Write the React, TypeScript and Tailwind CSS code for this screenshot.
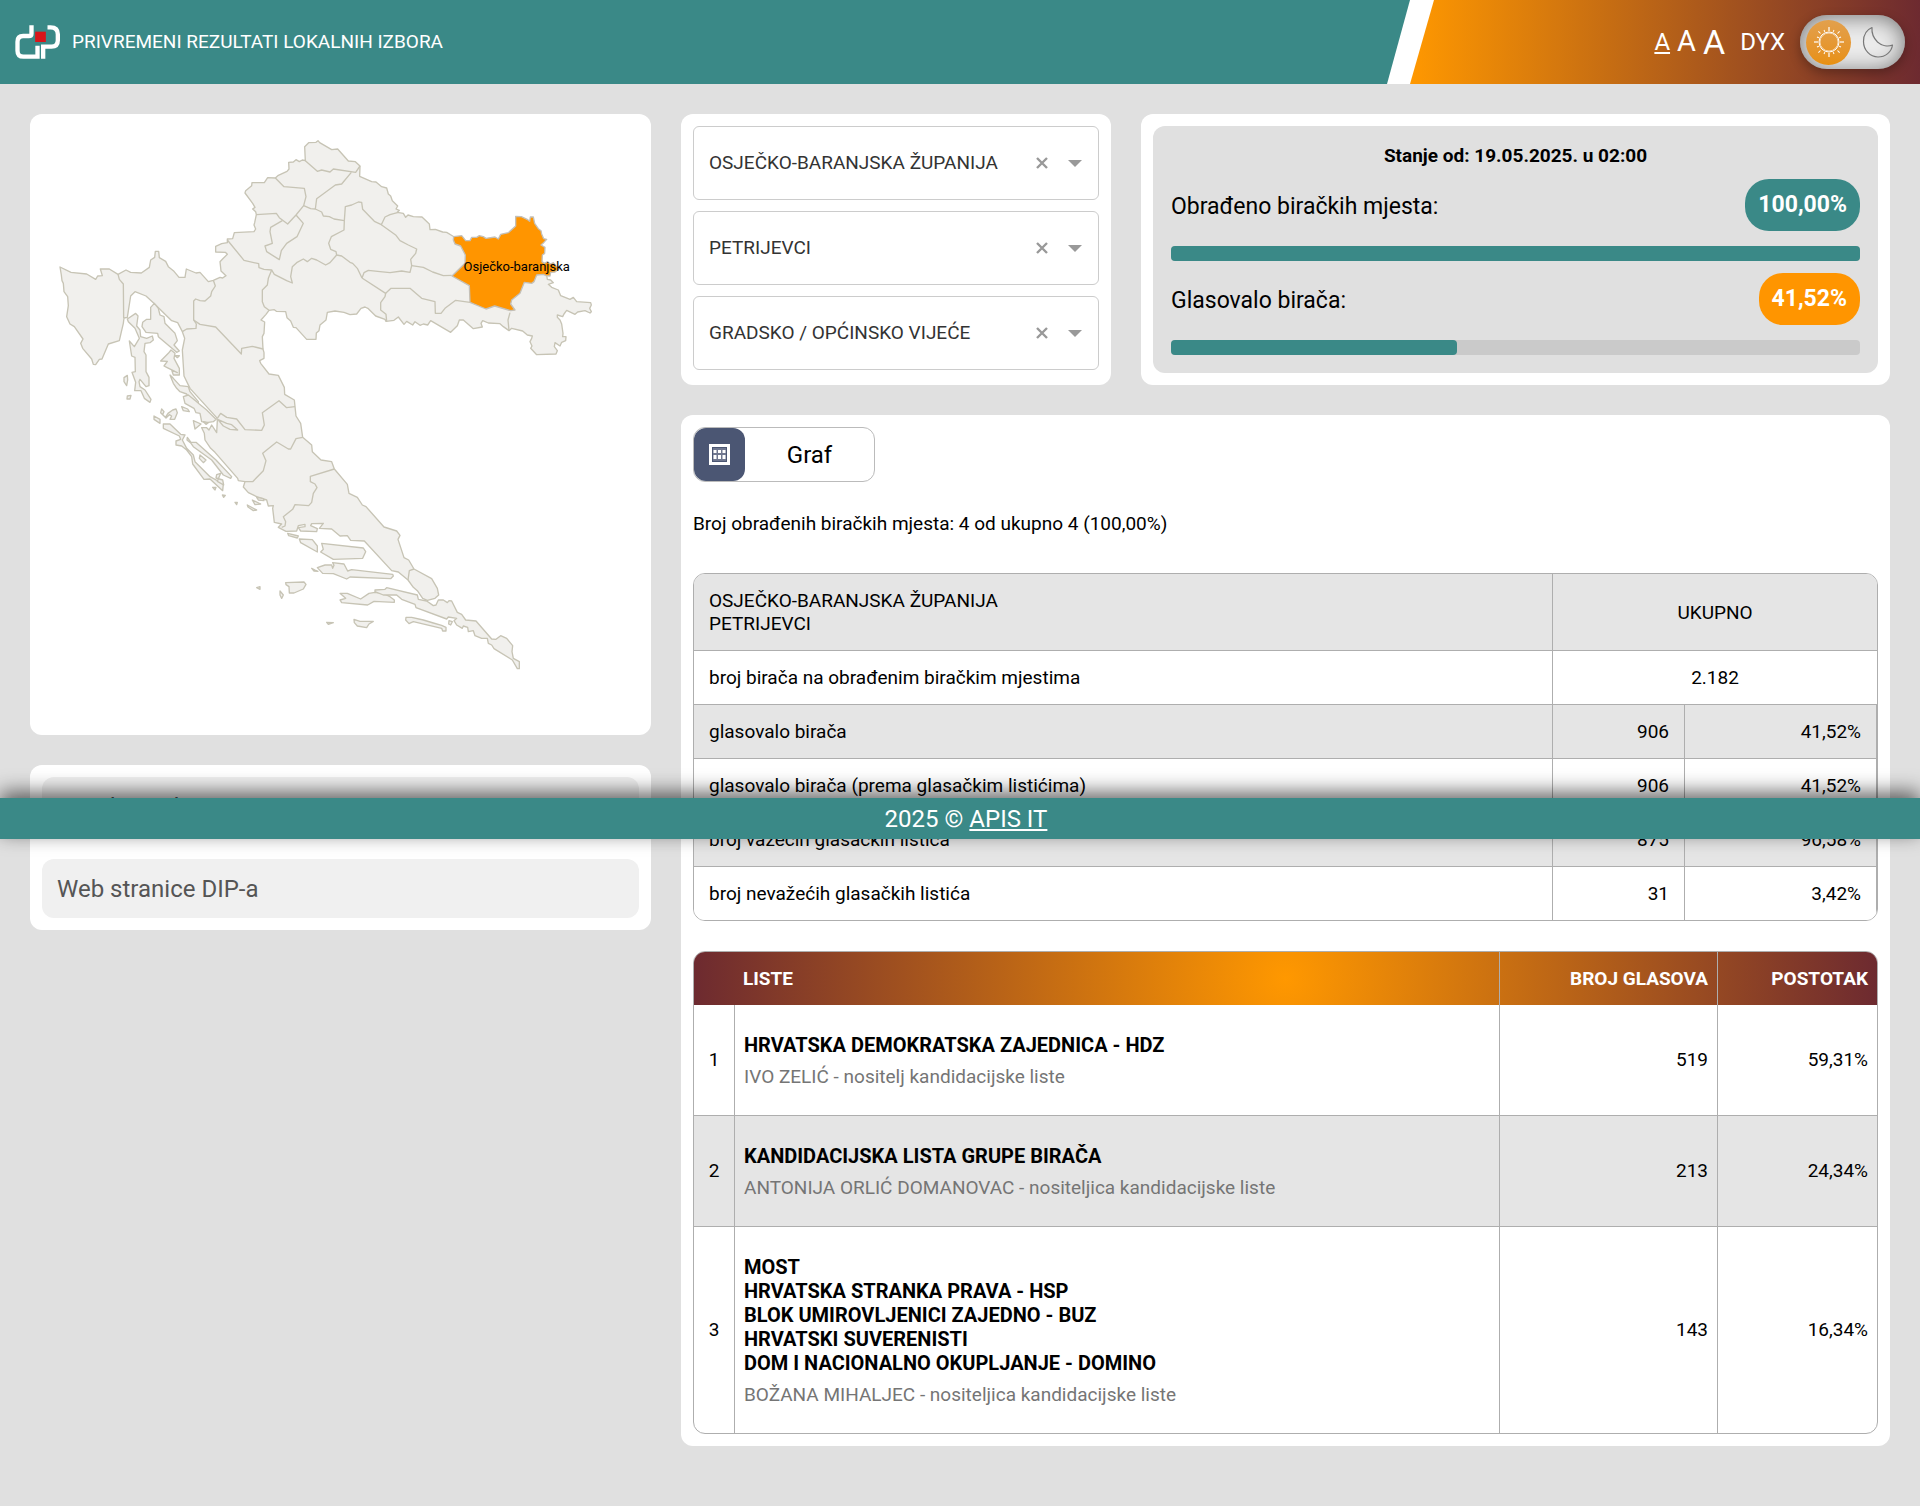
import { useState } from "react";

const COUNTRY =
  "M60 441 93 457 140 462 167 478 173 468 187 467 181 447 208 447 234 463 258 450 272 457 304 459 328 442 332 420 344 412 346 394 356 394 358 413 377 424 385 440 402 454 417 472 435 472 439 447 468 459 480 457 505 485 520 481 540 472 548 474 558 467 543 453 540 425 547 418 562 403 556 397 527 396 527 379 545 371 562 368 562 357 578 356 583 338 642 335 647 327 642 315 644 308 649 284 647 275 638 267 645 262 638 250 615 219 617 212 635 197 636 188 673 188 683 173 706 174 715 166 741 154 747 147 746 127 760 126 768 119 778 125 787 120 796 122 794 80 806 68 828 67 834 62 839 68 875 89 893 87 925 123 946 125 960 138 959 169 995 185 1008 186 1025 200 1040 204 1045 222 1052 228 1057 242 1073 258 1068 267 1078 271 1072 277 1090 280 1097 292 1104 285 1120 290 1146 291 1168 312 1170 329 1186 328 1208 336 1220 337 1238 348 1320 400 1500 440 1520 465 1522 478 1532 480 1540 488 1525 493 1535 502 1555 510 1562 527 1590 538 1600 532 1610 545 1652 548 1654 555 1649 565 1654 575 1650 579 1635 572 1613 576 1605 583 1580 571 1572 582 1568 590 1552 585 1552 592 1560 600 1565 612 1569 640 1568 650 1578 650 1577 662 1565 667 1560 678 1545 668 1543 680 1552 692 1548 702 1490 704 1472 685 1476 678 1470 665 1475 655 1477 648 1462 645 1448 633 1415 625 1407 632 1390 620 1380 611 1345 609 1328 602 1323 610 1327 621 1300 626 1270 600 1258 600 1252 617 1232 637 1172 602 1163 615 1150 612 1140 616 1125 605 1118 615 1100 604 1092 613 1075 591 1062 601 1038 604 1035 598 1007 588 985 566 975 561 963 565 950 582 930 584 912 577 885 573 862 577 858 600 840 615 837 632 829 639 828 658 800 658 768 623 760 622 752 603 741 593 737 575 709 574 703 569 687 571 678 583 663 600 674 606 672 640 667 650 669 687 672 698 672 715 659 722 662 730 687 762 715 766 733 802 734 823 763 840 768 888 782 910 788 952 815 975 817 995 843 1020 875 1025 883 1047 922 1093 927 1120 952 1132 967 1155 978 1160 1032 1221 1070 1233 1080 1246 1074 1258 1092 1313 1106 1320 1122 1347 1175 1376 1192 1405 1196 1425 1185 1435 1162 1441 1148 1435 1132 1412 1120 1402 1104 1380 1075 1356 1055 1352 973 1263 932 1261 922 1247 900 1248 875 1227 838 1225 850 1210 815 1211 812 1217 832 1226 830 1235 782 1233 775 1223 795 1220 795 1213 775 1217 770 1233 738 1234 715 1222 725 1212 703 1207 698 1165 700 1157 685 1158 680 1140 650 1130 625 1118 610 1101 615 1085 595 1082 593 1075 525 997 512 985 495 960 493 940 485 923 500 923 507 930 515 915 530 938 532 902 530 893 450 805 432 768 427 690 434 655 427 635 413 608 395 602 340 548 318 528 285 515 272 528 262 592 252 594 250 610 243 640 238 662 205 672 186 717 178 718 167 734 160 733 155 717 128 685 122 670 129 657 103 620 90 612 80 590 85 557 83 530 72 515 70 490 66 482 64 465Z";

const OSIJEK =
  "M1241 350 1265 347 1270 353 1277 362 1290 362 1295 352 1310 352 1318 347 1330 350 1338 355 1365 351 1375 357 1382 343 1405 338 1427 318 1427 289 1444 290 1463 299 1469 304 1471 291 1480 291 1484 310 1495 326 1503 332 1505 342 1511 356 1520 358 1511 368 1503 375 1515 382 1514 400 1507 405 1506 425 1513 430 1523 425 1531 432 1540 428 1548 438 1558 446 1545 456 1532 457 1530 468 1518 467 1510 463 1490 465 1482 485 1475 490 1453 487 1440 520 1415 540 1412 552 1425 570 1412 572 1364 558 1338 567 1290 547 1288 497 1236 468 1275 430 1276 405 1262 378 1245 372 1240 360Z";

const BORDERS = [
  "M234 463 238 478 250 492 251 594",
  "M520 481 526 498 515 515 512 528 495 543 480 542 467 537 461 543 461 600 469 612 468 625 440 627 427 635",
  "M461 600 480 613 527 621 604 702 605 685 637 679 669 687",
  "M562 360 612 421 656 431 657 443 672 448 695 450 685 475 682 495 667 510 667 545 673 560 687 571",
  "M695 450 703 463 740 482 757 489 752 470 757 440 770 428 790 417 802 425 815 415 830 420 857 435 870 428 890 405",
  "M649 284 709 280 718 293 743 312 768 285 791 257",
  "M706 174 732 200 793 205 798 230 791 257 812 266 826 267 830 236 886 195 905 192 934 157",
  "M796 122 832 154 845 150 870 156 880 147 947 157 960 138",
  "M826 267 845 276 850 288 868 290 882 297 913 302 912 330 874 350 866 370 872 388 888 395 890 405 905 408 930 427 938 430 952 445 966 474",
  "M727 302 692 322 690 335 697 370 675 378 680 395 718 419 724 392 740 370 771 350 790 310 768 285",
  "M913 302 916 260 935 255 955 246 965 247 968 268 1003 304 1024 314 1035 291 1050 284 1075 277",
  "M1024 314 1068 346 1080 362 1105 375 1130 387 1127 400 1112 418 1115 437 1110 457 1085 453 1050 458 1020 455 985 451 972 458 966 474",
  "M966 474 1037 520 1035 530 1022 548 1022 570 1038 583 1040 604",
  "M1037 520 1053 505 1110 505 1145 535 1185 545 1186 580 1203 580 1215 565 1247 541 1290 547",
  "M1115 437 1150 442 1178 456 1210 467 1235 466",
  "M1407 632 1404 600 1410 578",
  "M765 860 740 863 717 842 667 878 673 915 665 931 615 929 590 897 560 892 542 880 532 895",
  "M788 952 768 956 752 987 745 987 710 966 668 1000 678 1022 670 1052 638 1085 615 1085",
  "M883 1047 811 1069 811 1085 825 1092 831 1103 820 1120 815 1147 806 1157 765 1154 758 1168 730 1190 737 1205 735 1218 725 1222",
  "M1122 1347 1108 1352 1104 1380",
];

// Kvarner
const ISLANDS_NORTH = [
  "M262 597 287 580 294 588 290 618 300 630 302 650 320 655 337 648 340 660 330 668 315 670 312 695 318 705 318 755 327 772 327 797 318 800 300 778 297 785 300 800 315 810 333 838 330 847 313 835 303 812 284 812 287 787 276 757 286 755 285 712 275 708 268 663 283 680 298 655 285 625 265 605Z",
  "M343 550 355 565 360 585 372 590 375 610 405 640 412 662 402 675 418 693 410 697 355 650 353 640 318 637 306 620 308 607 320 598 332 598 332 562Z",
  "M393 690 405 700 402 715 418 745 418 765 400 765 395 750 412 758 380 742 372 738 382 724 362 723 385 700Z",
  "M405 707 418 707 412 713Z",
  "M390 765 400 775 420 797 445 800 450 815 475 845 475 852 450 840 440 822 420 815 410 805 400 790Z",
  "M252 773 262 766 263 780 260 797 252 785Z",
  "M262 828 273 826 270 837 261 837Z",
];

// Zadar and Šibenik archipelago
const ISLANDS_MIDDLE = [
  "M220 132 240 132 272 163 285 165 277 180 290 205 310 225 315 245 360 290 400 312 398 332 360 297 342 298 308 252 305 230 290 210 275 198 258 195 258 183 272 178 268 168 220 145Z",
  "M292 172 303 187 318 187 378 240 425 290 422 295 400 285 365 240 310 200 303 190 291 180Z",
  "M330 225 348 240 340 248 328 235Z",
  "M392 280 380 284 378 294 398 300 401 315 382 304Z",
  "M192 108 210 118 210 130 192 118Z",
  "M215 87 222 95 218 103 226 112 234 100 248 90 258 87 262 98 254 118 240 118 245 108 238 104 228 114 212 98Z",
  "M275 80 293 87 298 95 280 92Z",
  "M280 50 295 45 320 65 328 72 350 90 378 118 370 125 350 128 335 125 330 100 318 98 312 85 285 70Z",
  "M310 122 333 132 315 147Z",
  "M383 118 410 130 425 134 443 150 420 148 400 138Z",
  "M340 125 355 128 348 133Z",
  "M368 322 378 322 375 330Z",
  "M397 345 406 346 401 352Z",
  "M435 367 442 367 440 374Z",
  "M472 375 500 390 490 392 474 381Z",
  "M487 360 512 372 495 374Z",
  "M500 352 520 356 522 362 505 360Z",
  "M593 460 625 468 622 474 596 467Z",
  "M628 477 667 479 682 498 682 516 632 488Z",
  "M587 608 642 606 648 613 640 627 612 639 598 639 597 620 588 614Z",
  "M500 623 510 620 510 628Z",
  "M570 633 580 645 575 655 570 645Z",
];

// Split and Dubrovnik
const ISLANDS_SOUTH = [
  "M65 490 190 504 197 515 188 535 100 538 62 516 70 508Z",
  "M52 563 75 555 95 555 98 565 102 556 98 548 132 552 143 573 155 569 278 583 280 588 272 596 150 591 140 597 100 581 68 580Z",
  "M35 565 45 570 54 574 42 573Z",
  "M120 640 142 640 182 657 207 640 225 637 250 640 270 650 283 660 283 667 222 664 203 675 125 668 120 660 137 655Z",
  "M162 718 180 724 220 724 207 732 200 743 172 738 163 728Z",
  "M80 727 100 728 85 733Z",
  "M318 712 335 712 370 720 400 729 425 736 438 742 438 753 428 753 425 745 340 725 327 731 317 720Z",
  "M447 722 457 725 452 735 446 732Z",
  "M225 630 255 628 260 623 352 645 355 658 380 663 400 677 408 675 415 660 430 660 442 668 447 662 455 663 472 697 485 703 497 720 528 723 575 777 588 778 602 767 620 775 638 797 636 815 640 835 658 845 658 866 652 866 637 840 582 806 575 795 565 790 562 775 545 775 525 767 520 752 505 755 503 742 490 738 487 745 470 735 462 722 470 715 445 711 440 717 348 683 345 673 305 658 290 645 250 645 225 635Z",
];

function CountyMap() {
  return (
    <svg
      viewBox="-30 -18 1863 1863"
      className="block w-full"
      role="img"
      aria-label="Karta županija"
    >
      <g fill="#f1f0ed" stroke="#c7c4b5" strokeWidth="4" strokeLinejoin="round">
        <path d={COUNTRY} />
        {BORDERS.map((d) => (
          <path key={d} d={d} fill="none" />
        ))}
        <path d={OSIJEK} fill="#ff9500" stroke="#c4c0b8" />
        {ISLANDS_NORTH.map((d) => (
          <path key={d} d={d} />
        ))}
        <g transform="translate(150 780)">
          {ISLANDS_MIDDLE.map((d) => (
            <path key={d} d={d} />
          ))}
        </g>
        <g transform="translate(780 780)">
          {ISLANDS_SOUTH.map((d) => (
            <path key={d} d={d} />
          ))}
        </g>
      </g>
      <text x="1430" y="453" textAnchor="middle" fontSize="39">
        Osječko-baranjska
      </text>
    </svg>
  );
}

function Logo() {
  return (
    <svg viewBox="0 0 134 102" className="h-[34px] w-[45px]" aria-hidden>
      <g fill="none" stroke="#fff" strokeWidth="13" strokeLinecap="butt">
        <path d="M49 1v25q0 7-8 7H24Q7 33 7 50v27q0 18 18 18h42V62" />
        <path d="M97 7h9q22 0 22 21v18q0 19-19 19H84v36" />
      </g>
      <rect x="60" y="20" width="32" height="31" fill="#d9151a" />
    </svg>
  );
}

const RAYS = [0, 22.5, 45, 67.5, 90, 112.5, 135, 157.5, 180, 202.5, 225, 247.5, 270, 292.5, 315, 337.5];

function ThemeSwitch() {
  const [dark, setDark] = useState(false);
  return (
    <button
      type="button"
      role="switch"
      aria-checked={dark}
      aria-label="Tamni način"
      onClick={() => setDark((d) => !d)}
      className="flex h-[54px] w-[105px] items-center justify-between rounded-full bg-[#ececec] pl-[6px] pr-[11px] shadow-[inset_0_2px_22px_rgba(0,0,0,0.5),0_4px_12px_rgba(0,0,0,0.3)]"
    >
      <span className="flex size-[45px] items-center justify-center rounded-full bg-linear-to-b from-[#e2a04c] to-[#e8900d]">
        <svg viewBox="0 0 32 32" className="size-8" fill="none" stroke="#fff">
          <circle cx="16" cy="16" r="10" strokeWidth="1" />
          <circle cx="16" cy="16" r="9" strokeWidth="1" opacity="0.6" />
          {RAYS.map((a, i) => (
            <path
              key={a}
              d={i % 4 === 0 ? "M16 1v4" : i % 2 === 0 ? "M16 1v3" : "M16 3v2"}
              strokeWidth={i % 4 === 0 ? 2 : 1}
              opacity={i % 4 === 0 ? 0.6 : 1}
              transform={`rotate(${a} 16 16)`}
            />
          ))}
        </svg>
      </span>
      <svg viewBox="0 0 32 32" className="size-8" fill="none" stroke="#777" strokeWidth="1.2" strokeLinejoin="round">
        <path d="M10 1.500C4 4 1.500 10 1.500 15.500 1.500 24 8 31 16 31c7.500 0 13.500-5 14.500-12-4.500 2-10.500 1-15-3-4-4-6-9-5.500-14.500z" />
      </svg>
    </button>
  );
}

function Header() {
  return (
    <header className="flex h-[84px] bg-white text-white">
      <div className="flex flex-1 items-center gap-3 bg-[#3a8987] pl-[15px] [clip-path:polygon(0_0,100%_0,calc(100%_-_23px)_100%,0_100%)]">
        <Logo />
        <h1 className="text-[19px]">PRIVREMENI REZULTATI LOKALNIH IZBORA</h1>
      </div>
      <div className="flex w-[510px] items-center justify-end bg-[linear-gradient(to_right,#ff9800,#6d2a30)] pr-[15px] [clip-path:polygon(24px_0,100%_0,100%_100%,0_100%)]">
        <div className="flex items-center gap-[7px]">
          <button type="button" aria-label="Mala slova" className="text-2xl underline underline-offset-2">A</button>
          <button type="button" aria-label="Srednja slova" className="text-[29px]">A</button>
          <button type="button" aria-label="Velika slova" className="text-[34px]">A</button>
        </div>
        <button type="button" className="mx-[15px] text-2xl">DYX</button>
        <ThemeSwitch />
      </div>
    </header>
  );
}

const FILTERS = [
  { id: "zupanija", label: "Županija", value: "OSJEČKO-BARANJSKA ŽUPANIJA" },
  { id: "grad", label: "Grad / općina", value: "PETRIJEVCI" },
  { id: "razina", label: "Vrsta izbora", value: "GRADSKO / OPĆINSKO VIJEĆE" },
];

function Filters() {
  return (
    <section className="flex flex-col gap-[11px] rounded-xl bg-white p-3">
      {FILTERS.map((f) => (
        <div key={f.id} className="flex h-[74px] items-center rounded-md border border-[#ccc] pr-4">
          <select
            id={f.id}
            aria-label={f.label}
            defaultValue={f.value}
            className="h-full min-w-0 flex-1 appearance-none bg-transparent pl-[15px] text-[19px] text-[#333]"
          >
            <option>{f.value}</option>
          </select>
          <button type="button" aria-label="Očisti" className="mr-5">
            <svg viewBox="0 0 12 12" className="size-3" stroke="#999" strokeWidth="2.4">
              <path d="M1 1l10 10M11 1L1 11" />
            </svg>
          </button>
          <svg viewBox="0 0 14 7" className="h-[7px] w-[14px]" fill="#999" aria-hidden>
            <path d="M0 0h14L7 7z" />
          </svg>
        </div>
      ))}
    </section>
  );
}

function Progress({ label, text, value, pill }: { label: string; text: string; value: number; pill: string }) {
  return (
    <div>
      <div className="flex items-center justify-between">
        <span className="pt-1 text-[23px]">{label}</span>
        <span className={`rounded-3xl px-[13px] text-[23px] leading-[52px] font-bold text-white ${pill}`}>
          {text}
        </span>
      </div>
      <div
        role="progressbar"
        aria-label={label}
        aria-valuenow={value}
        className="mt-[15px] h-[15px] rounded bg-[#cacaca]"
      >
        <div className="h-full rounded bg-[#3a8987]" style={{ width: `${value}%` }} />
      </div>
    </div>
  );
}

const SUMMARY = [
  { label: "glasovalo birača", count: "906", share: "41,52%" },
  { label: "glasovalo birača (prema glasačkim listićima)", count: "906", share: "41,52%" },
  { label: "broj važećih glasačkih listića", count: "875", share: "96,58%" },
  { label: "broj nevažećih glasačkih listića", count: "31", share: "3,42%" },
];

function SummaryTable() {
  return (
    <div className="overflow-hidden rounded-xl border border-[#aeaeae]">
      <table className="w-full table-fixed border-separate border-spacing-0 text-[19px] leading-[23px]">
        <colgroup>
          <col />
          <col className="w-[132px]" />
          <col className="w-[193px]" />
        </colgroup>
        <thead>
          <tr className="h-[76px] bg-[#e5e5e5]">
            <th className="px-[15px] text-left font-normal">
              OSJEČKO-BARANJSKA ŽUPANIJA
              <br />
              PETRIJEVCI
            </th>
            <th colSpan={2} className="border-l border-[#aeaeae] font-normal">UKUPNO</th>
          </tr>
        </thead>
        <tbody>
          <tr className="h-[54px]">
            <td className="border-t border-[#aeaeae] px-[15px]">broj birača na obrađenim biračkim mjestima</td>
            <td colSpan={2} className="border-t border-l border-[#aeaeae] text-center">2.182</td>
          </tr>
          {SUMMARY.map((r) => (
            <tr key={r.label} className="h-[54px] odd:bg-white even:bg-[#e5e5e5]">
              <td className="border-t border-[#aeaeae] px-[15px]">{r.label}</td>
              <td className="border-t border-l border-[#aeaeae] px-[15px] text-right">{r.count}</td>
              <td className="border-x border-t border-[#aeaeae] px-[15px] text-right">{r.share}</td>
            </tr>
          ))}
        </tbody>
      </table>
    </div>
  );
}

const LISTS = [
  {
    names: ["HRVATSKA DEMOKRATSKA ZAJEDNICA - HDZ"],
    holder: "IVO ZELIĆ - nositelj kandidacijske liste",
    votes: "519",
    share: "59,31%",
  },
  {
    names: ["KANDIDACIJSKA LISTA GRUPE BIRAČA"],
    holder: "ANTONIJA ORLIĆ DOMANOVAC - nositeljica kandidacijske liste",
    votes: "213",
    share: "24,34%",
  },
  {
    names: [
      "MOST",
      "HRVATSKA STRANKA PRAVA - HSP",
      "BLOK UMIROVLJENICI ZAJEDNO - BUZ",
      "HRVATSKI SUVERENISTI",
      "DOM I NACIONALNO OKUPLJANJE - DOMINO",
    ],
    holder: "BOŽANA MIHALJEC - nositeljica kandidacijske liste",
    votes: "143",
    share: "16,34%",
  },
];

function ListsTable() {
  return (
    <div className="mt-[30px] overflow-hidden rounded-xl border border-[#aeaeae]">
      <table className="w-full table-fixed border-separate border-spacing-0 text-[19px] leading-6">
        <colgroup>
          <col className="w-10" />
          <col />
          <col className="w-[218px]" />
          <col className="w-[160px]" />
        </colgroup>
        <thead>
          <tr className="h-[53px] bg-[radial-gradient(circle,#ff9800,#6d2a30)] text-white">
            <th aria-label="Redni broj" />
            <th className="px-[9px] text-left">LISTE</th>
            <th className="border-l border-[#aeaeae] px-[9px] text-right">BROJ GLASOVA</th>
            <th className="border-l border-[#aeaeae] px-[9px] text-right">POSTOTAK</th>
          </tr>
        </thead>
        <tbody className="[&>tr+tr>td]:border-t">
          {LISTS.map((l, i) => (
            <tr key={l.votes} className="even:bg-[#e5e5e5]">
              <td className="border-[#aeaeae] text-center">{i + 1}</td>
              <td className="border-l border-[#aeaeae] px-[9px] pt-[28px] pb-[26px]">
                {l.names.map((n) => (
                  <div key={n} className="text-[20px] leading-6 font-bold">{n}</div>
                ))}
                <div className="mt-2 text-[#757575]">{l.holder}</div>
              </td>
              <td className="border-l border-[#aeaeae] px-[9px] text-right">{l.votes}</td>
              <td className="border-l border-[#aeaeae] px-[9px] text-right">{l.share}</td>
            </tr>
          ))}
        </tbody>
      </table>
    </div>
  );
}

function ViewToggle() {
  return (
    <div className="flex h-[55px] w-[182px] rounded-xl border border-[#bbb]">
      <button
        type="button"
        aria-label="Tablica"
        aria-pressed="true"
        className="flex w-[51px] items-center justify-center rounded-xl bg-[#4b5673]"
      >
        <svg viewBox="0 0 21 21" className="size-[21px]" fill="#fff" aria-hidden>
          <path d="M0 0h21v21H0zM3 3v15h15V3z" fillRule="evenodd" />
          <path d="M4 4h13v13H4z" opacity="0.2" />
          <path d="M4.500 6h3v3h-3zM9 6h3v3H9zM13.500 6h3v3h-3zM4.500 11h3v4h-3zM9 11h3v4H9zM13.500 11h3v4h-3z" />
        </svg>
      </button>
      <button type="button" aria-pressed="false" className="flex-1 text-2xl">Graf</button>
    </div>
  );
}

const LINKS = [
  { href: "#arhiva", text: "Rezultati izbora iz 2021." },
  { href: "#dip", text: "Web stranice DIP-a" },
];

export default function App() {
  return (
    <div className="relative min-h-screen bg-[#e0e0e0] font-['Roboto',sans-serif] text-black">
      <Header />
      <main className="grid grid-cols-[621fr_1209fr] items-start gap-[30px] px-[30px] pt-[30px] pb-[60px]">
        <div className="flex flex-col gap-[30px]">
          <section className="overflow-hidden rounded-xl bg-white">
            <CountyMap />
          </section>
          <nav className="flex flex-col gap-[23px] rounded-xl bg-white p-3">
            {LINKS.map((l) => (
              <a
                key={l.href}
                href={l.href}
                className="rounded-xl bg-[#f0f0f0] px-[15px] pt-[2px] text-2xl leading-[57px] text-[#555]"
              >
                {l.text}
              </a>
            ))}
          </nav>
        </div>
        <div className="flex flex-col gap-[30px]">
          <div className="grid h-[271px] grid-cols-[430fr_749fr] gap-[30px]">
            <Filters />
            <section className="rounded-xl bg-white p-3">
              <div className="flex h-full flex-col gap-3 rounded-xl bg-[#e0e0e0] p-[18px]">
                <h2 className="text-center text-[19px] leading-[23px] font-bold">
                  Stanje od: 19.05.2025. u 02:00
                </h2>
                <Progress label="Obrađeno biračkih mjesta:" text="100,00%" value={100} pill="bg-[#3a8987]" />
                <Progress label="Glasovalo birača:" text="41,52%" value={41.52} pill="bg-[#ff9500]" />
              </div>
            </section>
          </div>
          <section className="rounded-xl bg-white p-3">
            <ViewToggle />
            <p className="mt-[30px] mb-[38px] text-[19px] leading-[23px]">
              Broj obrađenih biračkih mjesta: 4 od ukupno 4 (100,00%)
            </p>
            <SummaryTable />
            <ListsTable />
          </section>
        </div>
      </main>
      <footer className="absolute inset-x-0 top-[798px] bg-[#3a8987] pt-[2px] pl-3 text-center text-2xl leading-[39px] text-white shadow-[0_-6px_20px_rgba(0,0,0,0.6)]">
        2025 © <a href="#apis" className="underline underline-offset-2">APIS IT</a>
      </footer>
    </div>
  );
}
